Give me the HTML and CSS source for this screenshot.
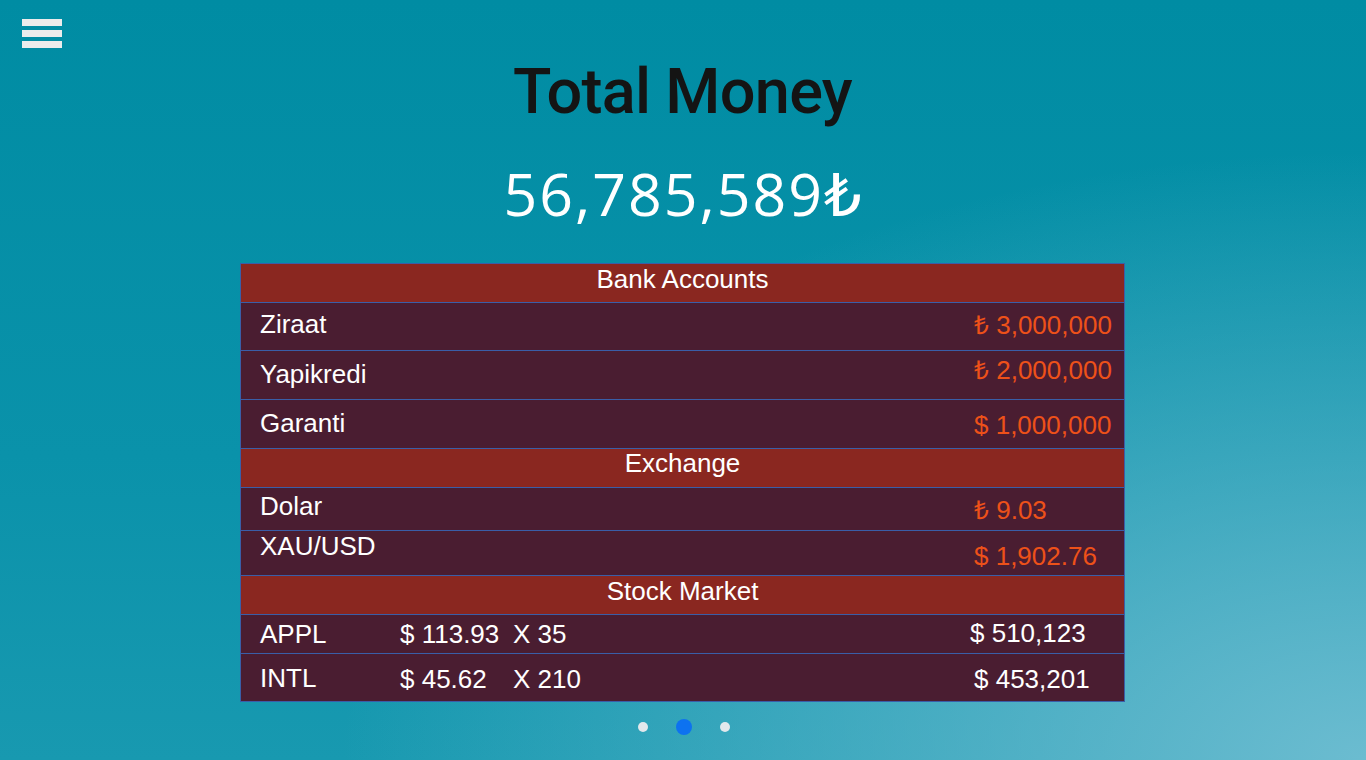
FILE: index.html
```html
<!DOCTYPE html>
<html lang="en">
<head>
<meta charset="utf-8">
<title>Total Money</title>
<link rel="stylesheet" href="styles.css">
</head>
<body>
<button class="menu-btn" aria-label="Menu">
  <span class="bar"></span><span class="bar"></span><span class="bar"></span>
</button>
<main class="page">
  <h1 class="title">Total Money</h1>
  <div class="total">56,785,589₺</div>
  <section class="board">
    <div class="row head"><span class="head-text">Bank Accounts</span></div>
    <div class="row r-ziraat">
      <span class="name p8">Ziraat</span>
      <span class="value val p9">₺ 3,000,000</span>
    </div>
    <div class="row r-tall">
      <span class="name p10">Yapikredi</span>
      <span class="value val p6">₺ 2,000,000</span>
    </div>
    <div class="row r-tall">
      <span class="name p10">Garanti</span>
      <span class="value val p12">$ 1,000,000</span>
    </div>
    <div class="row head"><span class="head-text h1">Exchange</span></div>
    <div class="row r-dolar">
      <span class="name p5">Dolar</span>
      <span class="value val p9">₺ 9.03</span>
    </div>
    <div class="row r-xau">
      <span class="name p2">XAU/USD</span>
      <span class="value val p12">$ 1,902.76</span>
    </div>
    <div class="row head"><span class="head-text">Stock Market</span></div>
    <div class="row r-appl">
      <span class="name p6">APPL</span>
      <span class="price p6">$ 113.93</span>
      <span class="qty p6">X 35</span>
      <span class="value total-val p5 shift">$ 510,123</span>
    </div>
    <div class="row r-intl">
      <span class="name p11">INTL</span>
      <span class="price p12">$ 45.62</span>
      <span class="qty p12">X 210</span>
      <span class="value total-val p12">$ 453,201</span>
    </div>
  </section>
  <nav class="dots">
    <span class="dot"></span>
    <span class="dot active"></span>
    <span class="dot"></span>
  </nav>
</main>
</body>
</html>
```

FILE: styles.css
```css
* { box-sizing: border-box; }

html, body {
  margin: 0;
  padding: 0;
  height: 760px;
  overflow: hidden;
}

body {
  font-family: "Liberation Sans", Arial, sans-serif;
  background:
    radial-gradient(ellipse 75% 80% at 100% 100%, rgba(112, 190, 210, 0.95) 0%, rgba(112, 190, 210, 0) 100%),
    linear-gradient(180deg, #008ca3 0%, #0a92aa 60%, #1899b0 100%);
}

.menu-btn {
  position: absolute;
  top: 19px;
  left: 22px;
  width: 40px;
  padding: 0;
  border: 0;
  background: none;
  display: flex;
  flex-direction: column;
  gap: 4px;
  cursor: pointer;
}

.menu-btn .bar {
  display: block;
  height: 7px;
  background: #ececec;
}

.page {
  display: flex;
  flex-direction: column;
  align-items: center;
  padding-right: 1px;
}

.title {
  margin: 54px 0 0;
  font-family: Roboto, "DejaVu Sans", sans-serif;
  font-weight: 500;
  font-size: 63px;
  line-height: 76px;
  color: #141414;
  letter-spacing: -0.7px;
}

.total {
  margin-top: 28px;
  padding-left: 2px;
  font-family: "Open Sans", "DejaVu Sans", sans-serif;
  font-weight: 400;
  font-size: 59px;
  line-height: 70px;
  color: #ffffff;
  letter-spacing: 2px;
}

.board {
  margin-top: 35px;
  width: 885px;
  border: 1px solid #3a5ea8;
  background: #4a1d31;
  color: #ffffff;
  font-size: 26px;
  line-height: 28px;
}

.row {
  display: grid;
  grid-template-columns: 140px 113px 461px 1fr;
  padding-left: 19px;
  align-items: start;
  border-bottom: 1px solid #3a5ea8;
}

.row:last-child { border-bottom: 0; }

.head {
  display: flex;
  justify-content: center;
  height: 39px;
  padding-left: 0;
  background: #8a2720;
}

.head-text { padding-top: 1px; }
.head-text.h1 { padding-top: 0; }

.r-ziraat { height: 48px; }
.r-tall { height: 49px; }
.r-dolar { height: 43px; }
.r-xau { height: 45px; }
.r-appl { height: 39px; }
.r-intl { height: 47px; }

.name { grid-column: 1; }
.price { grid-column: 2; }
.qty { grid-column: 3; }
.value { grid-column: 4; }

.val { color: #ee5119; }
.total-val { color: #ffffff; }
.shift { margin-left: -4px; }

.p2 { padding-top: 1px; }
.p5 { padding-top: 4px; }
.p6 { padding-top: 5px; }
.p8 { padding-top: 7px; }
.p9 { padding-top: 8px; }
.p10 { padding-top: 9px; }
.p11 { padding-top: 10px; }
.p12 { padding-top: 11px; }

.dots {
  display: flex;
  align-items: center;
  gap: 28px;
  margin-top: 17px;
  padding-left: 2px;
}

.dot {
  width: 10px;
  height: 10px;
  border-radius: 50%;
  background: #e2e8ec;
}

.dot.active {
  width: 16px;
  height: 16px;
  background: #0d72f0;
}
```
